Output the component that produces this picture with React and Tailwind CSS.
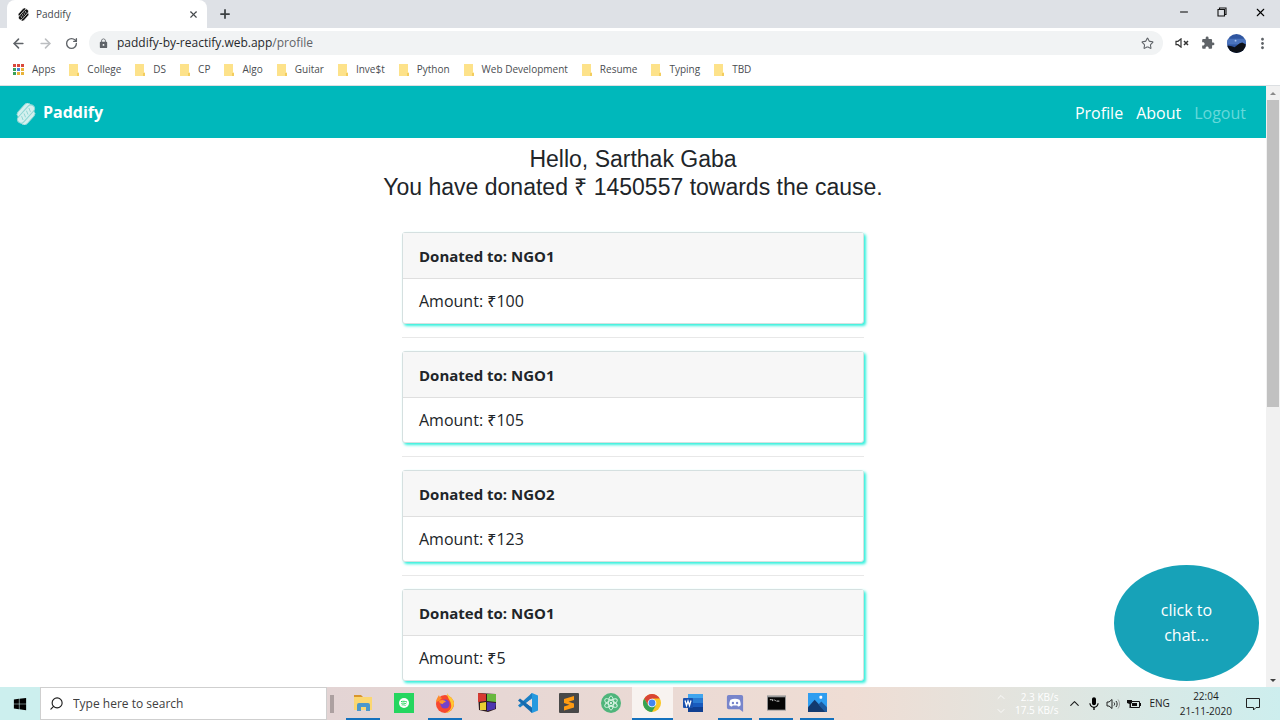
import {
  ArrowLeft,
  ArrowRight,
  ChevronDown,
  ChevronUp,
  Minus,
  Plus,
  RotateCw,
  Search,
  Star,
  X,
} from "lucide-react";
import { MdExtension, MdLock, MdMic, MdMoreVert } from "react-icons/md";
import { FaWindows } from "react-icons/fa";

const bookmarks = [
  "College",
  "DS",
  "CP",
  "Algo",
  "Guitar",
  "Inve$t",
  "Python",
  "Web Development",
  "Resume",
  "Typing",
  "TBD",
];

const donations = [
  { id: 1, ngo: "NGO1", amount: 100 },
  { id: 2, ngo: "NGO1", amount: 105 },
  { id: 3, ngo: "NGO2", amount: 123 },
  { id: 4, ngo: "NGO1", amount: 5 },
];

const apps = [
  { name: "File Explorer", Icon: ExplorerIcon, open: true },
  { name: "Spotify", Icon: SpotifyIcon },
  { name: "Firefox", Icon: FirefoxIcon, open: true },
  { name: "Blocks", Icon: BlocksIcon },
  { name: "VS Code", Icon: CodeIcon },
  { name: "Sublime Text", Icon: SublimeIcon },
  { name: "Atom", Icon: AtomIcon },
  { name: "Chrome", Icon: ChromeIcon, active: true },
  { name: "Word", Icon: WordIcon },
  { name: "Discord", Icon: DiscordIcon, open: true },
  { name: "Command Prompt", Icon: TerminalIcon, open: true },
  { name: "Photos", Icon: PhotosIcon, open: true },
];

/* ICONS */

function PadLogo({ className, fill, line }) {
  return (
    <svg viewBox="0 0 24 24" className={className}>
      <g transform="rotate(42 12 12)" fill={fill} stroke={line}>
        <rect x="4" y="1" width="8" height="19" rx="4" />
        <rect x="12" y="4" width="8" height="19" rx="4" />
        <rect x="8" y="0" width="8" height="24" rx="4" strokeWidth="1.2" />
        <path d="M10 5l4 2M10 9l4 2M10 13l4 2M10 17l4 2" strokeWidth="1" />
      </g>
    </svg>
  );
}

function AppsIcon() {
  const colors = ["#d9483b", "#d9483b", "#d9483b", "#3aa25a", "#4a7fd8", "#e8b33a", "#3aa25a", "#e8b33a", "#e8b33a"];
  return (
    <svg viewBox="0 0 11 11" className="size-[11px]">
      {colors.map((c, i) => (
        <rect key={i} x={(i % 3) * 4} y={Math.floor(i / 3) * 4} width="3" height="3" fill={c} />
      ))}
    </svg>
  );
}

function FolderIcon() {
  return (
    <svg viewBox="0 0 10 12" className="h-3 w-[10px]">
      <path d="M0 0h9v8l1 1v3H0z" fill="#fde28a" />
      <path d="M8 9h2v3H8z" fill="#f3cd5f" />
    </svg>
  );
}

function MutedIcon() {
  return (
    <svg viewBox="0 0 14 10" className="h-[10px] w-[14px]" fill="none" stroke="#333" strokeWidth="1.2">
      <path d="M1 3.3h2L6 .9v8.2L3 6.7H1z" />
      <path d="M9 3l4 4M13 3L9 7" strokeWidth="1.5" />
    </svg>
  );
}

function AvatarIcon() {
  return (
    <svg viewBox="0 0 20 20" className="size-[19px] rounded-full">
      <rect width="20" height="20" fill="#2f55a0" />
      <rect y="5" width="20" height="6" fill="#4a73bd" />
      <circle cx="9" cy="7" r="1" fill="#a9c4f0" />
      <path d="M0 12l5 1 3 1 5-4 3-1 4 2v9H0z" fill="#0c1018" />
    </svg>
  );
}

function RestoreIcon() {
  return (
    <svg viewBox="0 0 10 10" className="size-[10px]" fill="none" stroke="#111" strokeWidth="1.1">
      <path d="M1 2.5h6.5V9H1z" />
      <path d="M2.5 2.5V1H9v6.5H7.5" />
    </svg>
  );
}

function ExplorerIcon() {
  return (
    <svg viewBox="0 0 20 20" className="size-5">
      <path d="M1 2h7l2 2H1z" fill="#d9962d" />
      <path d="M1 4h18v13H1z" fill="#fbd771" />
      <path d="M4 18v-6a2 2 0 012-2h9a2 2 0 012 2v6h-4v-4H8v4z" fill="#4a98cc" />
    </svg>
  );
}

function SpotifyIcon() {
  return (
    <svg viewBox="0 0 20 20" className="size-5">
      <rect width="20" height="20" fill="#25d65f" />
      <circle cx="10" cy="10" r="5" fill="#fff" />
      <path d="M7 8.6c2-.6 4.3-.4 6 .5M7.3 10.4c1.8-.5 3.5-.3 5 .5M7.7 12c1.3-.3 2.6-.2 3.8.5" stroke="#25d65f" fill="none" />
    </svg>
  );
}

function FirefoxIcon() {
  return (
    <svg viewBox="0 0 20 20" className="size-5">
      <circle cx="10" cy="11" r="9" fill="#f7482f" />
      <path d="M12 0c1 3 6 4 7 10 0 5-4 10-9 10 5-2 7-5 6-9-.5-4-4-6-4-11z" fill="#ffc832" />
      <path d="M1 9C1 6 3 4 4 2c0 2 2 2 3 3L4 8z" fill="#ff8a2a" />
      <circle cx="10" cy="11" r="4.6" fill="#7542c8" />
      <path d="M4 8c3-2 6-1 7 1-2 0-3 1-3 2-2 0-4-1-4-3z" fill="#ff962b" />
    </svg>
  );
}

function BlocksIcon() {
  return (
    <svg viewBox="0 0 20 20" className="size-5">
      <path d="M1 0l18 1v15l-8 3-9-2z" fill="#2d1d1d" />
      <path d="M1 0l8 1v7l-8 1z" fill="#d63a32" />
      <path d="M10 1l9 0v8l-9-1z" fill="#68b83e" />
      <path d="M3 10l6-1v8l-6 0z" fill="#e9cf32" />
      <path d="M10 9l9 1-1 6-8 2z" fill="#4c35b0" />
    </svg>
  );
}

function CodeIcon() {
  return (
    <svg viewBox="0 0 20 20" className="size-5">
      <path d="M14 0l6 2.5v15L14 20 12 18V2z" fill="#2499e0" />
      <path d="M14 0L0 12.5l2 2L14 5.5z" fill="#1b7fc4" />
      <path d="M0 7.500l2-2L14 14.500V20z" fill="#166baf" />
      <path d="M14 5.5v9L8.5 10z" fill="#ecdcd7" />
    </svg>
  );
}

function SublimeIcon() {
  return (
    <svg viewBox="0 0 20 20" className="size-5">
      <rect width="20" height="20" rx="1" fill="#484848" />
      <path d="M15 3v4L9.5 8.8 15 10.5v4L5 17.5v-4l5.5-1.8L5 10V6z" fill="#ff9b12" />
    </svg>
  );
}

function AtomIcon() {
  return (
    <svg viewBox="0 0 20 20" className="size-5">
      <circle cx="10" cy="10" r="10" fill="#4fb57b" />
      <g fill="none" stroke="#d9f4e4" strokeWidth="0.9">
        <ellipse cx="10" cy="10" rx="2.6" ry="7" />
        <ellipse cx="10" cy="10" rx="2.6" ry="7" transform="rotate(60 10 10)" />
        <ellipse cx="10" cy="10" rx="2.6" ry="7" transform="rotate(120 10 10)" />
      </g>
      <circle cx="10" cy="10" r="1" fill="#fff" />
    </svg>
  );
}

function ChromeIcon() {
  return (
    <svg viewBox="0 0 20 20" className="size-[18px]">
      <circle cx="10" cy="10" r="10" fill="#f9c623" />
      <path d="M10 5h8.66A10 10 0 001.34 5l4.330 7.5z" fill="#d94535" />
      <path d="M1.34 5A10 10 0 0010 20l4.330-7.5H5.67z" fill="#36a253" />
      <circle cx="10" cy="10" r="4.8" fill="#fff" />
      <circle cx="10" cy="10" r="3.8" fill="#4686ee" />
    </svg>
  );
}

function WordIcon() {
  return (
    <svg viewBox="0 0 20 20" className="size-5">
      <path d="M5 1h15v5H5z" fill="#41a5ee" />
      <path d="M5 5h15v5H5z" fill="#2b7cd3" />
      <path d="M5 10h15v5H5z" fill="#185abd" />
      <path d="M5 14h15v5H5z" fill="#103f91" />
      <rect y="5" width="10" height="10" rx="1" fill="#1a51ad" />
      <path d="M2 7.5l1.500 5L5 8l1.500 4.500L8 7.500" stroke="#fff" strokeWidth="1.3" fill="none" />
    </svg>
  );
}

function DiscordIcon() {
  return (
    <svg viewBox="0 0 20 20" className="size-[18px]">
      <path d="M3 1h14a2 2 0 012 2v17l-4-3H3a2 2 0 01-2-2V3a2 2 0 012-2z" fill="#7885cb" />
      <path d="M5 6.500c3-1.800 7-1.800 10 0 1 2 1.500 4 1.300 6-1 1-2 1.300-3 1.500l-.8-1.200h-5L6.700 14c-1-.2-2-.5-3-1.500-.2-2 .3-4 1.300-6z" fill="#fff" />
      <circle cx="7.7" cy="10" r="1.3" fill="#7885cb" />
      <circle cx="12.3" cy="10" r="1.3" fill="#7885cb" />
    </svg>
  );
}

function TerminalIcon() {
  return (
    <svg viewBox="0 0 20 16" className="h-4 w-[19px]">
      <rect width="20" height="16" fill="#9a9a9a" />
      <rect x="1" y="2" width="18" height="13" fill="#050505" />
      <path d="M3 4.500h2M6 4v2M8 4.500l1 1.500M10 6h3" stroke="#ddd" fill="none" />
    </svg>
  );
}

function PhotosIcon() {
  return (
    <svg viewBox="0 0 20 20" className="size-[19px]">
      <rect width="20" height="20" fill="#2f9df0" />
      <path d="M0 15l7-8 12 13H0z" fill="#123a70" />
      <path d="M11 12l3-3 6 6v5h-2z" fill="#1d5ba0" />
      <rect x="12" y="3" width="3" height="3" rx="1" fill="#fff" />
    </svg>
  );
}

function SpeakerIcon() {
  return (
    <svg viewBox="0 0 14 12" className="h-3 w-[14px]" fill="none" stroke="#222">
      <path d="M1 4h2l3-2.500v9L3 8H1z" />
      <path d="M8 4.500c.8 1 .8 2 0 3M10 3c1.500 2 1.500 4 0 6" />
      <path d="M12 1.500c2 3 2 6 0 9" stroke="#999" />
    </svg>
  );
}

function BatteryIcon() {
  return (
    <svg viewBox="0 0 14 10" className="h-[10px] w-[14px]">
      <path d="M3.500 2.500h9v6h-9z" fill="none" stroke="#111" />
      <path d="M5 4h5v3H5zM13 4h1v3h-1zM0 1h5v3L3.500 5v4h-1V5L0 4z" fill="#111" />
    </svg>
  );
}

function NoticeIcon() {
  return (
    <svg viewBox="0 0 14 14" className="size-[14px]" fill="none" stroke="#222">
      <path d="M.5 1.500h13v9H10L7.500 13v-2.500h-7z" />
    </svg>
  );
}

/* BROWSER */

function TabStrip() {
  return (
    <div className="flex h-7 shrink-0 items-stretch bg-[#dee1e6]">
      <div className="ml-[7px] flex w-[200px] items-center rounded-t-lg bg-white pl-[10px] pr-2 text-[10px] text-[#45494d]">
        <PadLogo className="size-[13px]" fill="#111" line="#fff" />
        <span className="ml-[6px] flex-1">Paddify</span>
        <button aria-label="Close tab">
          <X size={11} strokeWidth={2.5} />
        </button>
      </div>
      <button aria-label="New tab" className="px-[11px] text-[#3c4043]">
        <Plus size={14} strokeWidth={3} />
      </button>
      <div className="ml-auto flex items-center gap-[27px] pr-[13px] pb-1 text-black">
        <button aria-label="Minimize">
          <Minus size={12} strokeWidth={2} />
        </button>
        <button aria-label="Restore">
          <RestoreIcon />
        </button>
        <button aria-label="Close">
          <X size={13} strokeWidth={2} />
        </button>
      </div>
    </div>
  );
}

function AddressBar() {
  return (
    <div className="flex h-[30px] shrink-0 items-center bg-white pl-[11px] pr-[13px] text-[#5f6368]">
      <div className="flex items-center gap-3">
        <button aria-label="Back">
          <ArrowLeft size={15} strokeWidth={2.5} />
        </button>
        <button aria-label="Forward" className="text-[#bcbec1]">
          <ArrowRight size={15} strokeWidth={2.5} />
        </button>
        <button aria-label="Reload">
          <RotateCw size={13} strokeWidth={2.5} />
        </button>
      </div>
      <div className="ml-[11px] flex h-6 flex-1 items-center rounded-full bg-[#f1f3f4] px-[9px]">
        <MdLock size={11} />
        <label className="relative ml-2 flex-1 text-[12px] leading-4">
          <span className="text-[#27292c]">paddify-by-reactify.web.app</span>
          <span>/profile</span>
          <input
            aria-label="Address"
            className="absolute inset-0 w-full bg-transparent outline-none"
          />
        </label>
        <button aria-label="Bookmark this page">
          <Star size={13} strokeWidth={2} />
        </button>
      </div>
      <div className="ml-3 flex items-center gap-3">
        <button aria-label="Muted">
          <MutedIcon />
        </button>
        <button aria-label="Extensions">
          <MdExtension size={14} />
        </button>
        <button aria-label="Account">
          <AvatarIcon />
        </button>
        <button aria-label="Menu" className="-mx-1">
          <MdMoreVert size={17} />
        </button>
      </div>
    </div>
  );
}

function BookmarksBar() {
  return (
    <div className="flex h-7 shrink-0 items-center gap-[14px] border-b border-[#dcdfe2] bg-white px-[13px] pb-1 text-[10px] text-[#4a4d51]">
      <a href="#apps" className="flex items-center gap-2">
        <AppsIcon />
        Apps
      </a>
      {bookmarks.map((name) => (
        <a key={name} href="#bookmark" className="flex items-center gap-2 whitespace-nowrap">
          <FolderIcon />
          {name}
        </a>
      ))}
    </div>
  );
}

function Scrollbar() {
  return (
    <div className="flex w-[14px] shrink-0 flex-col items-center bg-[#f1f1f1]">
      <div className="flex h-[14px] items-center">
        <div className="border-x-3 border-b-3 border-x-transparent border-b-[#8a8a8a]" />
      </div>
      <div className="h-[307px] w-3 bg-[#c1c1c1]" />
      <div className="mt-auto flex h-[14px] items-center">
        <div className="border-x-3 border-t-3 border-x-transparent border-t-[#404040]" />
      </div>
    </div>
  );
}

/* PAGE */

function Navbar() {
  return (
    <header className="flex h-[52px] items-center justify-between bg-[#00b8bb] pl-[15px] pr-5 text-white">
      <a href="#home" className="flex items-center gap-[6px] text-[16px] font-bold">
        <PadLogo className="mt-1 size-[22px]" fill="#d5f0ee" line="#8ed6d4" />
        Paddify
      </a>
      <nav className="flex gap-[13px] pt-[2px] text-[16px]">
        <a href="#profile">Profile</a>
        <a href="#about">About</a>
        <a href="#logout" className="text-[#66d8da]">Logout</a>
      </nav>
    </header>
  );
}

function DonationCard({ ngo, amount }) {
  return (
    <div className="rounded-[3px] border border-[#d5e0e0] bg-white leading-6 text-[#212529] shadow-[2px_2px_3px_#2ff0dc]">
      <div className="border-b border-[#dfdfdf] bg-[#f7f7f7] px-4 pt-[11px] pb-[10px] text-[15px] font-bold">
        Donated to: {ngo}
      </div>
      <div className="px-4 py-[10px] text-[16px]">Amount: ₹{amount}</div>
    </div>
  );
}

function ProfilePage() {
  return (
    <div className="min-w-0 flex-1 bg-white">
      <Navbar />
      <main>
        <h1 className="pt-[7px] text-center font-['Liberation_Sans',sans-serif] text-[23px] leading-7 text-[#212529]">
          Hello, Sarthak Gaba
          <br />
          You have donated ₹ 1450557 towards the cause.
        </h1>
        <div className="mx-auto mt-[31px] w-[462px]">
          {donations.map((d) => (
            <div key={d.id}>
              <DonationCard ngo={d.ngo} amount={d.amount} />
              <hr className="my-[13px] border-[#e8e8e8]" />
            </div>
          ))}
        </div>
      </main>
    </div>
  );
}

/* TASKBAR */

function Taskbar() {
  return (
    <footer className="flex h-[33px] shrink-0 items-stretch text-[#1c1c1c]">
      <button aria-label="Start" className="flex w-10 shrink-0 items-center justify-center bg-[#ccefee] text-black">
        <FaWindows size={14} />
      </button>
      <label className="flex w-[287px] shrink-0 items-center gap-[9px] border border-[#cfcfcf] bg-white pl-2">
        <Search size={15} strokeWidth={1.8} className="-scale-x-100" />
        <input
          placeholder="Type here to search"
          className="min-w-0 flex-1 text-[12px] outline-none placeholder:text-[#404040]"
        />
      </label>
      <div className="flex flex-1 items-stretch bg-linear-to-r from-[#e3d4d4] via-[#efddd4] via-55% to-[#cdeeee]">
        <div className="ml-[3px] h-[18px] w-1 self-center bg-[#aca0a0]" />
        <div className="ml-2 flex w-[496px] shrink-0 justify-between">
          {apps.map(({ name, Icon, open, active }) => (
            <button
              key={name}
              aria-label={name}
              className={`flex w-[41px] flex-col items-center ${active ? "bg-[#f8f3f0]" : ""}`}
            >
              <span className="flex flex-1 items-center">
                <Icon />
              </span>
              <span
                className={`h-[2px] ${active ? "w-full bg-[#1471bd]" : "w-[34px]"} ${open ? "bg-[#1471bd]" : ""}`}
              />
            </button>
          ))}
        </div>
        <div className="ml-auto flex items-center pr-5 text-[10px]">
          <div className="flex flex-col gap-[2px] text-white/80">
            <ChevronUp size={12} />
            <ChevronDown size={12} />
          </div>
          <div className="ml-2 text-right leading-[13px] text-white">
            <div>2.3 KB/s</div>
            <div>17.5 KB/s</div>
          </div>
          <ChevronUp size={15} strokeWidth={1.8} className="ml-[9px]" />
          <span className="ml-1 text-black">
            <MdMic size={16} />
          </span>
          <span className="ml-1">
            <SpeakerIcon />
          </span>
          <span className="ml-[7px]">
            <BatteryIcon />
          </span>
          <span className="ml-2">ENG</span>
          <div className="mx-[10px] text-center leading-[15px]">
            <div>22:04</div>
            <div>21-11-2020</div>
          </div>
          <span className="ml-1">
            <NoticeIcon />
          </span>
        </div>
      </div>
    </footer>
  );
}

export default function App() {
  return (
    <div className="flex h-screen flex-col overflow-hidden bg-white font-['Open_Sans','Noto_Sans',sans-serif]">
      <TabStrip />
      <AddressBar />
      <BookmarksBar />
      <div className="relative flex min-h-0 flex-1 overflow-hidden">
        <ProfilePage />
        <Scrollbar />
        <button className="absolute right-[21px] bottom-[6px] h-[116px] w-[145px] rounded-[50%] bg-[#17a2b8] px-8 text-[16px] leading-[25px] text-white">
          click to chat...
        </button>
      </div>
      <Taskbar />
    </div>
  );
}
